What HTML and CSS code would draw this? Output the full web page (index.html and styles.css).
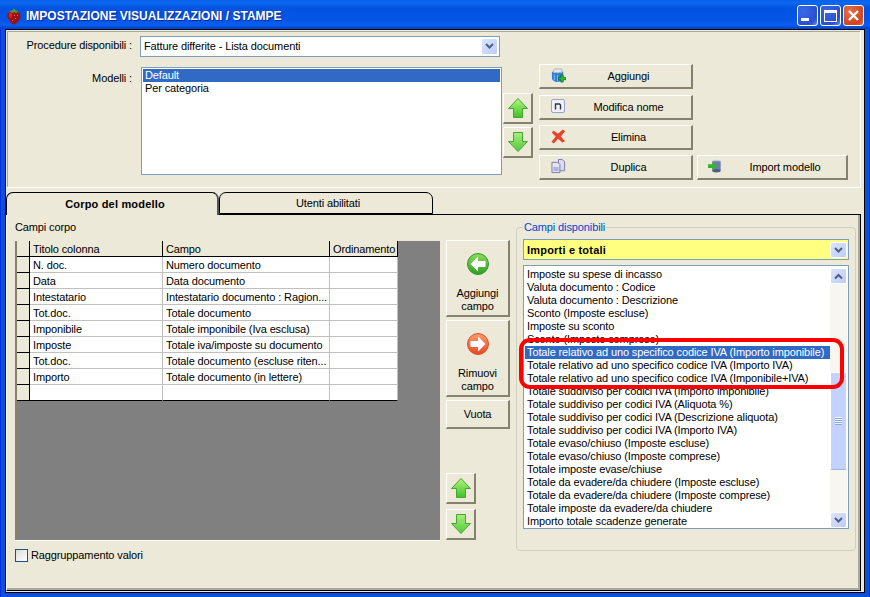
FILE: index.html
```html
<!DOCTYPE html>
<html lang="it">
<head>
<meta charset="utf-8">
<title>Impostazione visualizzazioni / stampe</title>
<link rel="stylesheet" href="styles.css">
</head>
<body>
<svg class="defs" width="0" height="0" aria-hidden="true">
  <defs>
    <linearGradient id="gUp" x1="0" y1="0" x2="0" y2="1"><stop offset="0" stop-color="#b4f480"/><stop offset="1" stop-color="#3cc226"/></linearGradient>
    <linearGradient id="gDown" x1="0" y1="1" x2="0" y2="0"><stop offset="0" stop-color="#55c83a"/><stop offset="1" stop-color="#a6ee7c"/></linearGradient>
    <linearGradient id="gBall" x1="0" y1="0" x2="0" y2="1"><stop offset="0" stop-color="#8fdc5c"/><stop offset="1" stop-color="#2a9e22"/></linearGradient>
    <linearGradient id="oBall" x1="0" y1="0" x2="0" y2="1"><stop offset="0" stop-color="#ff9c70"/><stop offset="1" stop-color="#e8481f"/></linearGradient>
    <symbol id="arrow-up" viewBox="0 0 20 20"><path d="M10 .5 19.500 10.500H14.500V19.500H5.500V10.500H.5Z" fill="url(#gUp)" stroke="#45a532" stroke-width="1"/></symbol>
    <symbol id="arrow-down" viewBox="0 0 20 20"><path d="M5.500 .5H14.500V9.500H19.500L10 19.500 .5 9.500H5.500Z" fill="url(#gDown)" stroke="#45a532" stroke-width="1"/></symbol>
    <symbol id="chev-down" viewBox="0 0 9 7"><path d="M1 1 4.500 4.500 8 1" fill="none" stroke="#4d6185" stroke-width="2"/></symbol>
    <symbol id="chev-up" viewBox="0 0 9 7"><path d="M1 5.500 4.500 2 8 5.500" fill="none" stroke="#4d6185" stroke-width="2"/></symbol>
  </defs>
</svg>
<div class="window">
  <header class="titlebar">
    <svg class="app-icon" viewBox="0 0 14 17"><path d="M7 4C11 3 14 4.500 13.500 8.500 13 12 9 16.500 7 16.500 5 16.500 1 12 .5 8.500 0 4.500 3 3 7 4Z" fill="#9c1016"/><path d="M2.500 5C4 4.500 5.500 5 5 8 4.700 10 3.500 10.500 2.500 9.500 1.800 8 1.800 6 2.500 5Z" fill="#d8232a"/><path d="M2.500 3 5 2.500 7 .5 9 2.500 11.500 3 9.500 5 7 4.200 4.500 5Z" fill="#4f9a35"/><g fill="#e8603c"><rect x="7" y="7" width="1" height="1"/><rect x="10" y="7" width="1" height="1"/><rect x="8" y="10" width="1" height="1"/><rect x="5" y="12" width="1" height="1"/></g></svg>
    <h1 class="title">IMPOSTAZIONE VISUALIZZAZIONI / STAMPE</h1>
    <div class="controls">
      <span class="ctl"><i class="min-glyph"></i></span>
      <span class="ctl"><i class="max-glyph"></i></span>
      <span class="ctl close"><svg viewBox="0 0 13 13" width="13" height="13"><path d="M2 2 11 11M11 2 2 11" stroke="#fff" stroke-width="2.400" fill="none"/></svg></span>
    </div>
  </header>
  <div class="client">
    <section class="top-panel">
      <div class="labels">
        <label class="lbl lbl-proc">Procedure disponibili :</label>
        <label class="lbl lbl-mod">Modelli :</label>
      </div>
      <div class="model-col">
        <div class="combo combo-proc"><span class="combo-text">Fatture differite - Lista documenti</span><span class="drop"><svg width="9" height="7"><use href="#chev-down"/></svg></span></div>
        <ul class="models">
          <li class="sel">Default</li>
          <li>Per categoria</li>
        </ul>
      </div>
      <div class="move-col">
        <button class="btn arrow-btn"><svg width="20" height="20"><use href="#arrow-up"/></svg></button>
        <button class="btn arrow-btn"><svg width="20" height="20"><use href="#arrow-down"/></svg></button>
      </div>
      <div class="action-col">
        <button class="btn act"><svg class="ico" viewBox="0 0 16 16"><path d="M1 4C3 6 11 6 13 4V11C13 14 8 15 7 15 4 15 1 13 1 11Z" fill="#2f7fd8"/><path d="M3.500 7V13M7 7.500V14" stroke="#8fc0f0" stroke-width="1"/><path d="M2 3.500 4 1H11L12.500 3.500C10 5.500 4 5.500 2 3.500Z" fill="#e6e8e8" stroke="#8a9090" stroke-width=".6"/><path d="M10.500 7.500H13V10H15.500V12.500H13V15H10.500V12.500H8V10H10.500Z" fill="#25c035" stroke="#0b6b18" stroke-width=".8"/></svg><span>Aggiungi</span></button>
        <button class="btn act"><svg class="ico" viewBox="0 0 15 15"><rect x=".5" y=".5" width="13" height="13" rx="1.500" fill="#eef1fb" stroke="#97a3d0"/><path d="M4.500 10.500V4.500M4 5H8.500L9.500 6V10.500" fill="none" stroke="#333" stroke-width="1.400"/></svg><span>Modifica nome</span></button>
        <button class="btn act"><svg class="ico" viewBox="0 0 16 16"><path d="M2.500 1.500 7.500 5 12.500 .5 15 2.500 10.500 8 15 13 12 14.500 7.500 10.500 3 15.500 .5 13.500 5 8 1 4Z" fill="#e8442a"/></svg><span>Elimina</span></button>
        <div class="act-row">
          <button class="btn act"><svg class="ico" viewBox="0 0 16 16"><path d="M8 .5H12L14.500 3V12.500H8Z" fill="#dcdcee" stroke="#7a78a8"/><path d="M1 3.500H7L9.500 6V14.500H1Z" fill="#e4e6f4" stroke="#7a78a8"/><rect x="2.500" y="8.500" width="5.500" height="4.500" fill="#a9b8d8"/></svg><span>Duplica</span></button>
          <button class="btn act act-wide"><svg class="ico ico-sm" viewBox="0 0 16 16"><ellipse cx="9" cy="2.500" rx="4.500" ry="1.800" fill="#c0c6dc"/><rect x="4.500" y="2.500" width="9" height="10" fill="#6e7aa8"/><ellipse cx="9" cy="12.500" rx="4.500" ry="1.800" fill="#4f5a88"/><path d="M0 5.500H5V3L10 7.500 5 12V9.500H0Z" fill="#2fb52f"/></svg><span>Import modello</span></button>
        </div>
      </div>
    </section>

    <nav class="tabs">
      <div class="tab active">Corpo del modello</div>
      <div class="tab">Utenti abilitati</div>
    </nav>

    <section class="tab-panel">
      <div class="left-col">
        <div class="caption">Campi corpo</div>
        <div class="grid-area">
          <table class="grid">
            <colgroup><col class="c0"><col class="c1"><col class="c2"><col class="c3"></colgroup>
            <thead><tr><th></th><th>Titolo colonna</th><th>Campo</th><th>Ordinamento</th></tr></thead>
            <tbody>
              <tr><th></th><td>N. doc.</td><td>Numero documento</td><td></td></tr>
              <tr><th></th><td>Data</td><td>Data documento</td><td></td></tr>
              <tr><th></th><td>Intestatario</td><td>Intestatario documento : Ragion...</td><td></td></tr>
              <tr><th></th><td>Tot.doc.</td><td>Totale documento</td><td></td></tr>
              <tr><th></th><td>Imponibile</td><td>Totale imponibile (Iva esclusa)</td><td></td></tr>
              <tr><th></th><td>Imposte</td><td>Totale iva/imposte su documento</td><td></td></tr>
              <tr><th></th><td>Tot.doc.</td><td>Totale documento (escluse riten...</td><td></td></tr>
              <tr><th></th><td>Importo</td><td>Totale documento (in lettere)</td><td></td></tr>
              <tr><th></th><td></td><td></td><td></td></tr>
            </tbody>
          </table>
        </div>
        <label class="check"><span class="box"></span>Raggruppamento valori</label>
      </div>

      <div class="mid-col">
        <button class="btn big"><svg width="22" height="22" viewBox="0 0 22 22"><circle cx="11" cy="11" r="10.500" fill="url(#gBall)" stroke="#2f9a26"/><path d="M11 3.500 3.500 11 11 18.500V14H18.500V8H11Z" fill="#fff"/></svg><span>Aggiungi<br>campo</span></button>
        <button class="btn big"><svg width="22" height="22" viewBox="0 0 22 22"><circle cx="11" cy="11" r="10.500" fill="url(#oBall)" stroke="#e0502a"/><path d="M11 3.500 18.500 11 11 18.500V14H3.500V8H11Z" fill="#fff"/></svg><span>Rimuovi<br>campo</span></button>
        <button class="btn vuota">Vuota</button>
        <button class="btn arrow-btn up2"><svg width="20" height="20"><use href="#arrow-up"/></svg></button>
        <button class="btn arrow-btn down2"><svg width="20" height="20"><use href="#arrow-down"/></svg></button>
      </div>

      <fieldset class="group">
        <legend>Campi disponibili</legend>
        <div class="combo combo-yellow"><span class="combo-text">Importi e totali</span><span class="drop"><svg width="9" height="7"><use href="#chev-down"/></svg></span></div>
        <div class="fields">
          <ul class="field-list">
            <li>Imposte su spese di incasso</li>
            <li>Valuta documento : Codice</li>
            <li>Valuta documento : Descrizione</li>
            <li>Sconto (Imposte escluse)</li>
            <li>Imposte su sconto</li>
            <li>Sconto (Imposte comprese)</li>
            <li class="sel">Totale relativo ad uno specifico codice IVA (Importo imponibile)</li>
            <li>Totale relativo ad uno specifico codice IVA (Importo IVA)</li>
            <li>Totale relativo ad uno specifico codice IVA (Imponibile+IVA)</li>
            <li>Totale suddiviso per codici IVA (Importo imponibile)</li>
            <li>Totale suddiviso per codici IVA (Aliquota %)</li>
            <li>Totale suddiviso per codici IVA (Descrizione aliquota)</li>
            <li>Totale suddiviso per codici IVA (Importo IVA)</li>
            <li>Totale evaso/chiuso (Imposte escluse)</li>
            <li>Totale evaso/chiuso (Imposte comprese)</li>
            <li>Totale imposte evase/chiuse</li>
            <li>Totale da evadere/da chiudere (Imposte escluse)</li>
            <li>Totale da evadere/da chiudere (Imposte comprese)</li>
            <li>Totale imposte da evadere/da chiudere</li>
            <li>Importo totale scadenze generate</li>
          </ul>
          <div class="scrollbar">
            <span class="sb-btn"><svg width="9" height="7"><use href="#chev-up"/></svg></span>
            <div class="sb-track"><span class="sb-thumb"><i></i></span></div>
            <span class="sb-btn"><svg width="9" height="7"><use href="#chev-down"/></svg></span>
          </div>
        </div>
        <div class="annotation"></div>
      </fieldset>
    </section>
  </div>
</div>
</body>
</html>
```
FILE: styles.css
```css
* { box-sizing: border-box; }
html, body { margin: 0; padding: 0; }
body { width: 870px; height: 597px; overflow: hidden; font: 11px/13px "Liberation Sans", Arial, sans-serif; letter-spacing: -.12px; color: #000; }
.defs { position: absolute; }
ul { list-style: none; margin: 0; padding: 0; }

.window { width: 870px; height: 597px; display: flex; flex-direction: column; background: #0a4fe0; padding: 0 4px 4px; border-left: 1px solid #0831d9; border-right: 1px solid #0831d9; }
.titlebar { height: 29px; flex: none; margin: 0 -5px; padding: 3px 6px 0 7px; display: flex; align-items: center; background: linear-gradient(#0a5fe8 0, #0a68f0 3px, #0352e0 8px, #0355e6 20px, #0a5ef0 25px, #0340c8 29px); }
.app-icon { width: 14px; height: 17px; margin-right: 5px; flex: none; }
.title { flex: 1; margin: 0; font: bold 12px/16px "Liberation Sans", Arial, sans-serif; letter-spacing: 0; color: #fff; text-shadow: 1px 1px 0 #0a2a90; }
.controls { display: flex; gap: 2px; margin-top: -1px; }
.ctl { width: 21px; height: 21px; border: 1px solid #fff; border-radius: 3px; background: radial-gradient(circle at 30% 30%, #3a68e8, #2a4fd0 70%, #6a8cf0); display: flex; align-items: center; justify-content: center; }
.ctl.close { background: radial-gradient(circle at 30% 30%, #e8704a, #d0441f 70%, #e07050); }
.min-glyph { width: 8px; height: 3px; background: #fff; margin: 8px 5px 0 0; }
.max-glyph { width: 13px; height: 12px; border: 1px solid #fff; border-top-width: 3px; }

.client { flex: 1; min-height: 0; background: #ece9d8; border: 1px solid #000; padding: 1px 3px 1px 0; display: flex; flex-direction: column; }

.btn { font: 11px/13px "Liberation Sans", Arial, sans-serif; letter-spacing: -.12px; color: #000; background: #ece9d8; padding: 0; border: solid; border-color: #fff #85816e #85816e #fff; border-width: 1px 2px 2px 1px; display: flex; align-items: center; }

.top-panel { height: 157px; flex: none; display: flex; margin-left: 1px; border: 1px solid #fff; border-top: 0; border-left: 0; box-shadow: inset 1px 1px 0 #aca899; }
.labels { width: 125px; flex: none; display: flex; flex-direction: column; align-items: flex-end; padding-top: 8px; }
.lbl-mod { margin-top: 20px; }
.model-col { width: 362px; flex: none; margin-left: 7px; padding-top: 5px; }
.combo { display: flex; align-items: center; justify-content: space-between; background: #fff; border: 1px solid #7f9db9; padding: 1px 1px 1px 2px; }
.combo-text { padding-left: 1px; }
.combo-proc { width: 360px; height: 21px; margin-left: 1px; }
.drop { width: 17px; height: 100%; flex: none; display: flex; align-items: center; justify-content: center; background: linear-gradient(135deg, #dbe4fd, #bdcdf7); border: 1px solid #fff; border-radius: 2px; }
.models { width: 361px; height: 108px; margin: 10px 0 0 2px; background: #fff; border: 1px solid #7f9db9; padding: 1px; }
.models li { height: 13px; padding-left: 2px; }
.sel { background: #316ac5; color: #fff; }
.move-col { flex: none; width: 30px; margin-left: 2px; padding-top: 62px; display: flex; flex-direction: column; gap: 3px; }
.arrow-btn { width: 30px; height: 31px; justify-content: center; }
.action-col { flex: none; margin-left: 6px; padding-top: 33px; display: flex; flex-direction: column; gap: 5px; }
.act { width: 154px; height: 25px; position: relative; justify-content: center; padding-left: 26px; }
.act:nth-child(1) { margin-bottom: 1px; }
.act-row { display: flex; gap: 4px; }
.ico { position: absolute; left: 11px; top: 3px; width: 15px; height: 15px; }
.ico-sm { left: 10px; }
.act-wide { width: 151px; padding-left: 26px; }

.tabs { display: flex; height: 23px; flex: none; margin-top: 4px; position: relative; z-index: 1; }
.tab { width: 214px; height: 22px; padding: 1px 0 0 4px; background: #ece9d8; border: 1px solid #000; border-bottom: 0; border-radius: 7px 7px 0 0; display: flex; align-items: center; justify-content: center; }
.tab.active { width: 213px; padding-left: 6px; font-weight: bold; letter-spacing: .18px; height: 23px; border-right: 2px solid #555; }
.tab.active + .tab { border-bottom: 1px solid #000; }

.tab-panel { flex: 1; min-height: 0; margin-top: -1px; display: flex; border: 1px solid #000; border-left-color: #fff; box-shadow: inset -2px -2px 0 #aca899; padding: 6px 0 0 8px; }
.left-col { width: 425px; flex: none; }
.caption { height: 13px; }
.grid-area { width: 425px; height: 300px; margin-top: 7px; background: #808080; border: solid #fff; border-width: 0 0 1px 0; box-shadow: inset 2px 0 0 #85816e; padding-left: 2px; }
.grid { border-collapse: separate; border-spacing: 0; table-layout: fixed; width: 381px; background: #fff; }
.c0 { width: 13px; } .c1 { width: 133px; } .c2 { width: 167px; } .c3 { width: 68px; }
.grid th, .grid td { height: 16px; padding: 1px 0 0 3px; font-weight: normal; text-align: left; overflow: hidden; white-space: nowrap; }
.grid thead th { background: #ece9d8; border-right: 1px solid #000; border-bottom: 1px solid #000; }
.grid tbody th { background: #ece9d8; border-right: 1px solid #000; border-bottom: 1px solid #000; }
.grid tbody td { border-right: 1px solid #c0c0c0; border-bottom: 1px solid #c0c0c0; }
.grid tbody tr:last-child th, .grid tbody tr:last-child td { border-bottom: 1px solid #000; }
.check { display: flex; align-items: center; gap: 3px; margin-top: 8px; }
.box { width: 13px; height: 13px; border: 1px solid #1c5180; background: linear-gradient(135deg, #dcdcd7, #fff); }

.mid-col { width: 64px; flex: none; margin-left: 6px; display: flex; flex-direction: column; padding-top: 19px; }
.big { width: 64px; height: 77px; flex-direction: column; justify-content: flex-start; padding-top: 12px; margin-bottom: 3px; }
.big span { margin-top: 12px; }
.vuota { width: 64px; height: 29px; justify-content: center; }
.up2 { margin-top: 44px; }
.down2 { margin-top: 5px; }

.group { width: 340px; height: 330px; flex: none; margin: 0 0 0 6px; padding: 5px 6px 0; border: 1px solid #d0d0bf; border-radius: 4px; position: relative; min-width: 0; }
.group legend { padding: 0 1px; margin-left: 0; color: #0046d5; line-height: 13px; }
.combo-yellow { height: 21px; padding-top: 2px; background: #ffff80; font-weight: bold; letter-spacing: .2px; }
.fields { margin-top: 5px; height: 264px; background: #fff; border: 1px solid #7f9db9; padding: 2px 1px 0; display: flex; justify-content: space-between; }
.field-list { width: 307px; overflow: hidden; }
.field-list li { height: 13px; padding-left: 2px; white-space: nowrap; }
.scrollbar { width: 17px; display: flex; flex-direction: column; height: 260px; }
.sb-btn { height: 16px; flex: none; display: flex; align-items: center; justify-content: center; background: linear-gradient(135deg, #dbe4fd, #bdcdf7); border: 1px solid #fff; border-radius: 2px; }
.sb-track { flex: 1; background: #f7f6f1; padding-top: 88px; }
.sb-thumb { display: flex; height: 98px; align-items: center; justify-content: center; background: #c3d3fd; border: 1px solid #fff; border-bottom-color: #9db4e8; border-radius: 2px; }
.sb-thumb i { width: 7px; height: 8px; background: repeating-linear-gradient(#eef3ff 0 1px, #8ea8e0 1px 2px); }
.annotation { position: absolute; left: 2px; top: 104px; width: 325px; height: 51px; border: 4px solid #f00; border-radius: 11px; pointer-events: none; }
```
